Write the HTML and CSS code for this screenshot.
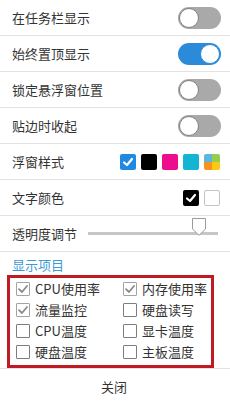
FILE: index.html
```html
<!DOCTYPE html>
<html>
<head>
<meta charset="utf-8">
<link rel="stylesheet" href="styles.css">
</head>
<body>
<div class="panel">
  <div class="row"><span class="label">在任务栏显示</span><span class="toggle"><span class="knob"></span></span></div>
  <div class="row"><span class="label">始终置顶显示</span><span class="toggle on"><span class="knob"></span></span></div>
  <div class="row"><span class="label">锁定悬浮窗位置</span><span class="toggle"><span class="knob"></span></span></div>
  <div class="row"><span class="label">贴边时收起</span><span class="toggle"><span class="knob"></span></span></div>
  <div class="row"><span class="label">浮窗样式</span>
    <span class="swatches">
      <span class="sw sw-blue"><svg viewBox="0 0 16 16" width="16" height="16"><polyline points="4,8.5 7,11 12,5" fill="none" stroke="#fff" stroke-width="2.2" stroke-linecap="round" stroke-linejoin="round"/></svg></span>
      <span class="sw sw-black"></span>
      <span class="sw sw-pink"></span>
      <span class="sw sw-cyan"></span>
      <span class="sw sw-multi"><i class="q q1"></i><i class="q q2"></i><i class="q q3"></i><i class="q q4"></i></span>
    </span>
  </div>
  <div class="row"><span class="label">文字颜色</span>
    <span class="swatches">
      <span class="sw sw-black"><svg viewBox="0 0 16 16" width="16" height="16"><polyline points="4,8.5 7,11 12,5" fill="none" stroke="#fff" stroke-width="2.2" stroke-linecap="round" stroke-linejoin="round"/></svg></span>
      <span class="sw sw-white"></span>
    </span>
  </div>
  <div class="row slider-row"><span class="label">透明度调节</span>
    <span class="slider"><span class="track"></span>
      <svg class="thumb" viewBox="0 0 14 18" width="14" height="18"><path d="M0.5,0.5 H13.5 V11 L7,17.3 L0.5,11 Z" fill="#fff" stroke="#9a9a9a" stroke-width="1"/></svg>
    </span>
  </div>
  <div class="section">
    <div class="section-title">显示项目</div>
    <div class="items">
      <label class="item"><span class="cb checked"><svg viewBox="0 0 14 14" width="14" height="14"><polyline points="3,7.2 6,10 11,4" fill="none" stroke="#8a8a8a" stroke-width="1.8" stroke-linecap="round" stroke-linejoin="round"/></svg></span>CPU使用率</label>
      <label class="item"><span class="cb checked"><svg viewBox="0 0 14 14" width="14" height="14"><polyline points="3,7.2 6,10 11,4" fill="none" stroke="#8a8a8a" stroke-width="1.8" stroke-linecap="round" stroke-linejoin="round"/></svg></span>内存使用率</label>
      <label class="item"><span class="cb checked"><svg viewBox="0 0 14 14" width="14" height="14"><polyline points="3,7.2 6,10 11,4" fill="none" stroke="#8a8a8a" stroke-width="1.8" stroke-linecap="round" stroke-linejoin="round"/></svg></span>流量监控</label>
      <label class="item"><span class="cb"></span>硬盘读写</label>
      <label class="item"><span class="cb"></span>CPU温度</label>
      <label class="item"><span class="cb"></span>显卡温度</label>
      <label class="item"><span class="cb"></span>硬盘温度</label>
      <label class="item"><span class="cb"></span>主板温度</label>
    </div>
  </div>
  <div class="footer">关闭</div>
</div>
</body>
</html>
```
FILE: styles.css
```css
html, body {
  margin: 0;
  padding: 0;
  background: #fff;
}
body {
  font-family: "Noto Sans CJK SC", "Noto Sans", sans-serif;
  font-size: 13px;
  color: #333;
}
.panel {
  width: 230px;
}
.row {
  height: 35px;
  border-bottom: 1px solid #e2e2e2;
  display: flex;
  align-items: center;
  justify-content: space-between;
  padding: 0 10px 0 12px;
}
.label {
  line-height: 20px;
  white-space: nowrap;
}
.toggle {
  width: 43px;
  height: 22px;
  border-radius: 11px;
  background: #a9a9a9;
  box-sizing: border-box;
  padding: 1px;
  display: flex;
  align-items: center;
  margin-right: -1px;
}
.toggle .knob {
  width: 20px;
  height: 20px;
  box-sizing: border-box;
  border-radius: 50%;
  background: #fff;
  border: 1.5px solid #7f7f7f;
}
.toggle.on {
  background: #2b8bd9;
  justify-content: flex-end;
}
.toggle.on .knob {
  border-color: #2b8bd9;
}
.swatches {
  display: flex;
  gap: 5px;
}
.sw {
  width: 16px;
  height: 16px;
  border-radius: 2px;
  box-sizing: border-box;
  display: block;
  overflow: hidden;
  position: relative;
}
.sw svg { display: block; }
.sw-blue { background: #2089e2; }
.sw-black { background: #000; }
.sw-pink { background: #ec0e8d; }
.sw-cyan { background: #13b5d3; }
.sw-white { background: #fff; border: 1px solid #c4c4c4; }
.sw-multi {
  display: grid;
  grid-template-columns: 1fr 1fr;
  grid-template-rows: 1fr 1fr;
}
.q { display: block; }
.q1 { background: #5db7dd; }
.q2 { background: #97cf4c; }
.q3 { background: #f6921e; }
.q4 { background: #fdc814; }
.slider-row {
  gap: 11px;
  padding-right: 12px;
}
.slider {
  flex: 1;
  height: 20px;
  position: relative;
  display: flex;
  align-items: center;
}
.track {
  display: block;
  width: 100%;
  height: 3px;
  background: #c6c6c6;
}
.thumb {
  position: absolute;
  left: 104px;
  top: -6px;
}
.section {
  border-bottom: 1px solid #e2e2e2;
}
.section-title {
  color: #3d9ad6;
  padding: 3px 0 0 12px;
  line-height: 20px;
  height: 20px;
}
.items {
  margin: 0 16px 0 7px;
  border: 3px solid #be1b22;
  padding: 0 0 3px 6px;
  display: grid;
  grid-template-columns: 107px 1fr;
  grid-auto-rows: 21px;
  height: 84px;
}
.item {
  display: flex;
  align-items: center;
  gap: 5px;
  white-space: nowrap;
  color: #333;
  line-height: 20px;
}
.cb {
  width: 14px;
  height: 14px;
  box-sizing: border-box;
  border: 1px solid #7d7d7d;
  border-radius: 1px;
  background: #fff;
  display: block;
  flex: none;
}
.cb svg {
  display: block;
  margin: -1px;
}
.cb.checked {
  border-color: #a3a3a3;
}
.footer {
  height: 34px;
  display: flex;
  align-items: center;
  justify-content: center;
  padding-right: 2px;
  color: #333;
}
```
